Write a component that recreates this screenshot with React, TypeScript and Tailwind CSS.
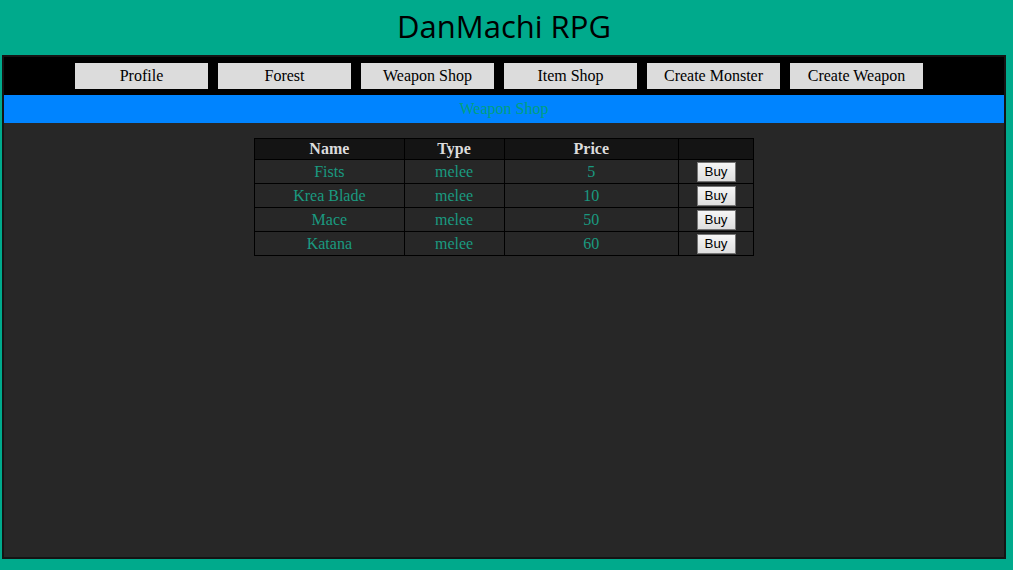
import React from 'react';

type Weapon = { name: string; type: string; price: number };

const weapons: Weapon[] = [
  { name: 'Fists', type: 'melee', price: 5 },
  { name: 'Krea Blade', type: 'melee', price: 10 },
  { name: 'Mace', type: 'melee', price: 50 },
  { name: 'Katana', type: 'melee', price: 60 },
];

const navItems = ['Profile', 'Forest', 'Weapon Shop', 'Item Shop', 'Create Monster', 'Create Weapon'];

const App: React.FC = () => {
  return (
    <div className="min-h-[570px] bg-[#00aa8c] pt-[2px] font-['Liberation_Serif',serif]">
      <div className="w-[1004px] ml-[2px]">
        <h1 className="h-[53px] pt-[2px] text-center text-[31px] font-medium leading-[44px] text-black font-['Open_Sans',sans-serif]">
          DanMachi RPG
        </h1>
      </div>

      <div className="ml-[2px] w-[1004px] h-[504px] border-2 border-[#141414] bg-[#272727]">
        {/* nav */}
        <div className="flex justify-center gap-[10px] pr-[10px] py-[6px] bg-black">
          {navItems.map((item) => (
            <button
              key={item}
              className="w-[133px] h-[26px] bg-[#dcdcdc] text-black text-[16px] leading-[26px]"
            >
              {item}
            </button>
          ))}
        </div>

        <div className="h-[28px] bg-[#0084ff] text-center text-[16px] leading-[28px] text-[#00a080]">
          Weapon Shop
        </div>

        <table className="mt-[15px] mx-auto w-[500px] border-collapse border border-black text-[16px]">
          <thead>
            <tr className="bg-[#141414] text-[#dcdcdc]">
              <th className="w-[150px] border border-black p-0 font-bold leading-[20px]">Name</th>
              <th className="w-[100px] border border-black p-0 font-bold leading-[20px]">Type</th>
              <th className="w-[175px] border border-black p-0 font-bold leading-[20px]">Price</th>
              <th className="w-[75px] border border-black p-0"></th>
            </tr>
          </thead>
          <tbody>
            {weapons.map((w) => (
              <tr key={w.name} className="text-[#1a9a80] text-center">
                <td className="border border-black p-0 leading-[23px]">{w.name}</td>
                <td className="border border-black p-0 leading-[23px]">{w.type}</td>
                <td className="border border-black p-0 leading-[23px]">{w.price}</td>
                <td className="border border-black p-0 leading-[0px]">
                  <button className="w-[39px] h-[20px] border border-[#767676] bg-gradient-to-b from-[#f6f6f6] to-[#dedede] text-black text-[13.33px] leading-[18px] font-['Liberation_Sans',Arial,sans-serif] align-middle">
                    Buy
                  </button>
                </td>
              </tr>
            ))}
          </tbody>
        </table>
      </div>
    </div>
  );
};

export default App;
